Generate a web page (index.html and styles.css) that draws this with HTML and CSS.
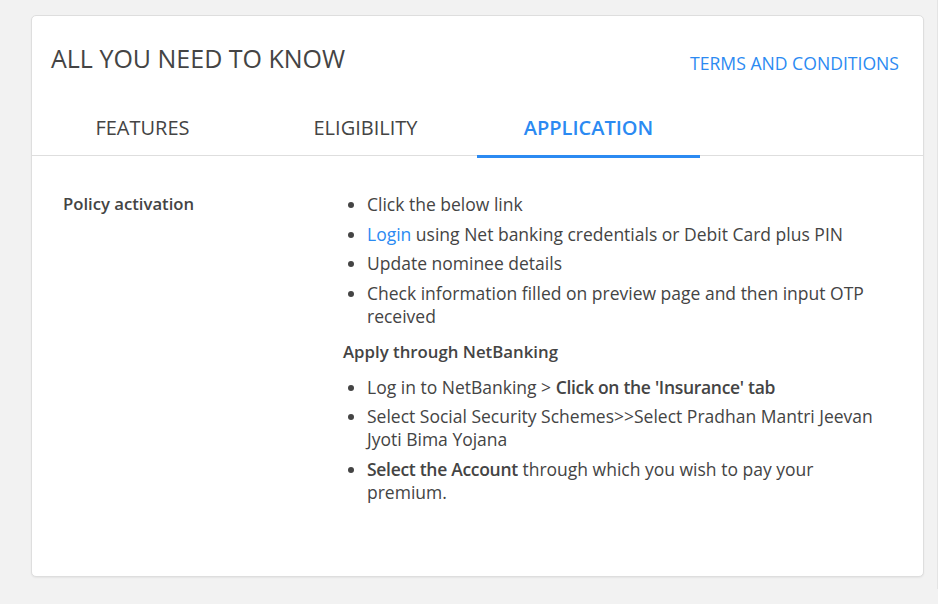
FILE: index.html
```html
<!DOCTYPE html>
<html lang="en">
<head>
<meta charset="utf-8">
<title>All you need to know</title>
<link rel="stylesheet" href="styles.css">
</head>
<body>
<div class="page">
  <section class="card">
    <header class="card-head">
      <h2 class="title">ALL YOU NEED TO KNOW</h2>
      <a class="terms" href="#">TERMS AND CONDITIONS</a>
    </header>
    <nav class="tabs">
      <div class="tab">FEATURES</div>
      <div class="tab">ELIGIBILITY</div>
      <div class="tab active">APPLICATION</div>
    </nav>
    <div class="content">
      <div class="label">Policy activation</div>
      <div class="details">
        <ul class="list">
          <li>Click the below link</li>
          <li><a class="link" href="#">Login</a> using Net banking credentials or Debit Card plus PIN</li>
          <li>Update nominee details</li>
          <li>Check information filled on preview page and then input OTP received</li>
        </ul>
        <div class="subhead">Apply through NetBanking</div>
        <ul class="list">
          <li>Log in to NetBanking &gt; <b>Click on the 'Insurance' tab</b></li>
          <li>Select Social Security Schemes&gt;&gt;Select Pradhan Mantri Jeevan Jyoti Bima Yojana</li>
          <li><b>Select the Account</b> through which you wish to pay your premium.</li>
        </ul>
      </div>
    </div>
  </section>
  <div class="edge"></div>
</div>
</body>
</html>
```

FILE: styles.css
```css
html, body {
  margin: 0;
  padding: 0;
  background: #f2f2f2;
}
body {
  font-family: "Open Sans", "Liberation Sans", sans-serif;
  color: #444;
}
.page {
  display: flex;
  align-items: flex-start;
  padding: 15px 0 0 31px;
  height: 604px;
  box-sizing: border-box;
}
.card {
  width: 893px;
  height: 562px;
  box-sizing: border-box;
  background: #fff;
  border: 1px solid #dedede;
  border-radius: 5px;
  box-shadow: 0 1px 2px rgba(0,0,0,0.06);
}
.edge {
  margin-left: 13px;
  width: 1px;
  height: 589px;
  margin-top: -15px;
  background: #e4e4e4;
}
.card-head {
  display: flex;
  justify-content: space-between;
  align-items: flex-start;
  padding: 22px 24px 0 19px;
}
.title {
  margin: 0;
  font-size: 25px;
  font-weight: 400;
  line-height: 40px;
  color: #444;
}
.terms {
  margin-top: 13px;
  font-size: 17.6px;
  line-height: 24px;
  color: #2b8af2;
  text-decoration: none;
}
.tabs {
  display: flex;
  margin: 25px 0 0 -1px;
  border-bottom: 1px solid #dedede;
}
.tab {
  width: 223px;
  text-align: center;
  font-size: 20px;
  line-height: 28px;
  padding: 11px 0 13px;
  color: #444;
}
.tab.active {
  position: relative;
  color: #2b8af2;
  font-weight: 600;
}
.tab.active::after {
  content: "";
  position: absolute;
  left: 0;
  right: 0;
  bottom: -3px;
  height: 3px;
  background: #2b8af2;
}
.content {
  display: flex;
  padding: 36px 30px 0 31px;
}
.label {
  width: 280px;
  font-size: 16.7px;
  font-weight: 600;
  line-height: 23px;
  color: #444;
}
.details {
  flex: 1;
  font-size: 17.5px;
  line-height: 23px;
  padding-right: 3px;
}
.list {
  margin: 0;
  padding-left: 24px;
}
.list li {
  margin-bottom: 6.5px;
}
.list li:first-child {
  margin-top: 1px;
}
.subhead {
  font-weight: 600;
  font-size: 16.8px;
  margin: 12px 0 13px;
}
.link {
  color: #2b8af2;
  text-decoration: none;
}
b {
  font-weight: 600;
  letter-spacing: -0.3px;
}
```
